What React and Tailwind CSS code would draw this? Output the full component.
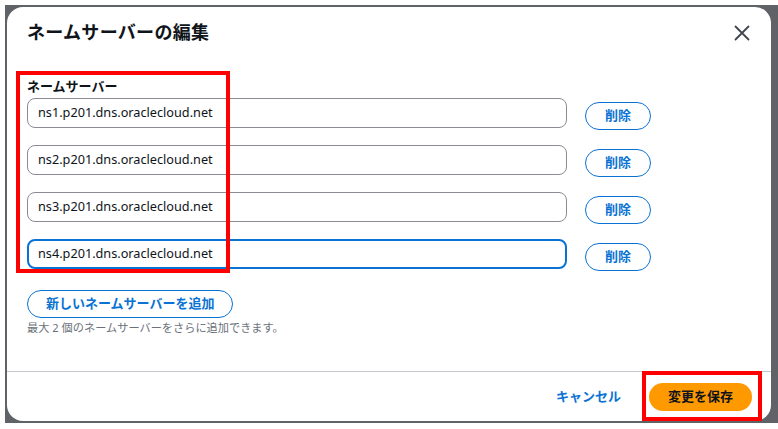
import React from "react";

const servers = [
  "ns1.p201.dns.oraclecloud.net",
  "ns2.p201.dns.oraclecloud.net",
  "ns3.p201.dns.oraclecloud.net",
  "ns4.p201.dns.oraclecloud.net",
];

const font = { fontFamily: '"Noto Sans", "Noto Sans CJK JP", sans-serif' };

function CloseIcon() {
  return (
    <svg width="16" height="16" viewBox="0 0 16 16" fill="none">
      <path d="M1.5 1.5L14.5 14.5M14.5 1.5L1.5 14.5" stroke="#414750" strokeWidth="1.8" strokeLinecap="round" />
    </svg>
  );
}

export default function App() {
  return (
    <div className="w-[778px] h-[429px] bg-white pl-[5px] pt-[5px] overflow-hidden" style={font}>
      <div className="w-[773px] h-[418px] bg-[#5f6368] pl-[2px] pt-[2px]">
        {/* modal */}
        <div className="relative w-[764px] h-[414px] bg-white rounded-[16px] flex flex-col">
          {/* header */}
          <div className="h-[50px] px-[20px] flex items-center justify-between">
            <h1 className="text-[18px] font-bold text-[#0f141a] tracking-[0.3px]">ネームサーバーの編集</h1>
            <button className="mr-[1px] mt-[1px]">
              <CloseIcon />
            </button>
          </div>

          {/* body */}
          <div className="flex-1 px-[20px] pt-[20px]">
            <div className="text-[13px] font-bold text-[#0f141a] leading-[18px] mb-[3px]">ネームサーバー</div>
            <div className="flex flex-col gap-[15px]">
              {servers.map((s, i) => (
                <div key={s} className="flex items-start gap-[18px]">
                  <div
                    className={`w-[540px] h-[30px] rounded-[8px] flex items-center text-[12.7px] text-[#0f141a] ${
                      i === 3 ? "border-2 border-[#0972d3] pl-[9px]" : "border border-[#8c8c94] pl-[10px]"
                    }`}
                  >
                    {s}
                  </div>
                  <button className="mt-[4px] w-[66px] h-[28px] rounded-full border-[1.5px] border-[#0972d3] text-[#0972d3] text-[13px] font-bold flex items-center justify-center">
                    削除
                  </button>
                </div>
              ))}
            </div>
            <button className="mt-[19px] h-[28px] px-[18px] rounded-full border-[1.5px] border-[#0972d3] text-[#0972d3] text-[13px] font-bold flex items-center">
              新しいネームサーバーを追加
            </button>
            <div className="mt-[2px] text-[11.2px] text-[#6b717a] leading-[16px]">最大 2 個のネームサーバーをさらに追加できます。</div>
          </div>

          {/* footer */}
          <div className="h-[50px] border-t border-[#c6c6cd] flex items-center justify-end pr-[19px] gap-[28px]">
            <button className="text-[13px] font-bold text-[#0972d3]">キャンセル</button>
            <button className="w-[103px] h-[28px] rounded-full bg-[#ff9900] text-[13px] font-bold text-[#0f141a] flex items-center justify-center">
              変更を保存
            </button>
          </div>

          {/* annotation boxes */}
          <div className="absolute left-[9px] top-[64px] w-[214px] h-[202px] border-[4px] border-[#ff0000]" />
          <div className="absolute left-[635px] top-[364px] w-[120px] h-[50px] border-[4px] border-[#ff0000]" />
        </div>
      </div>
    </div>
  );
}
